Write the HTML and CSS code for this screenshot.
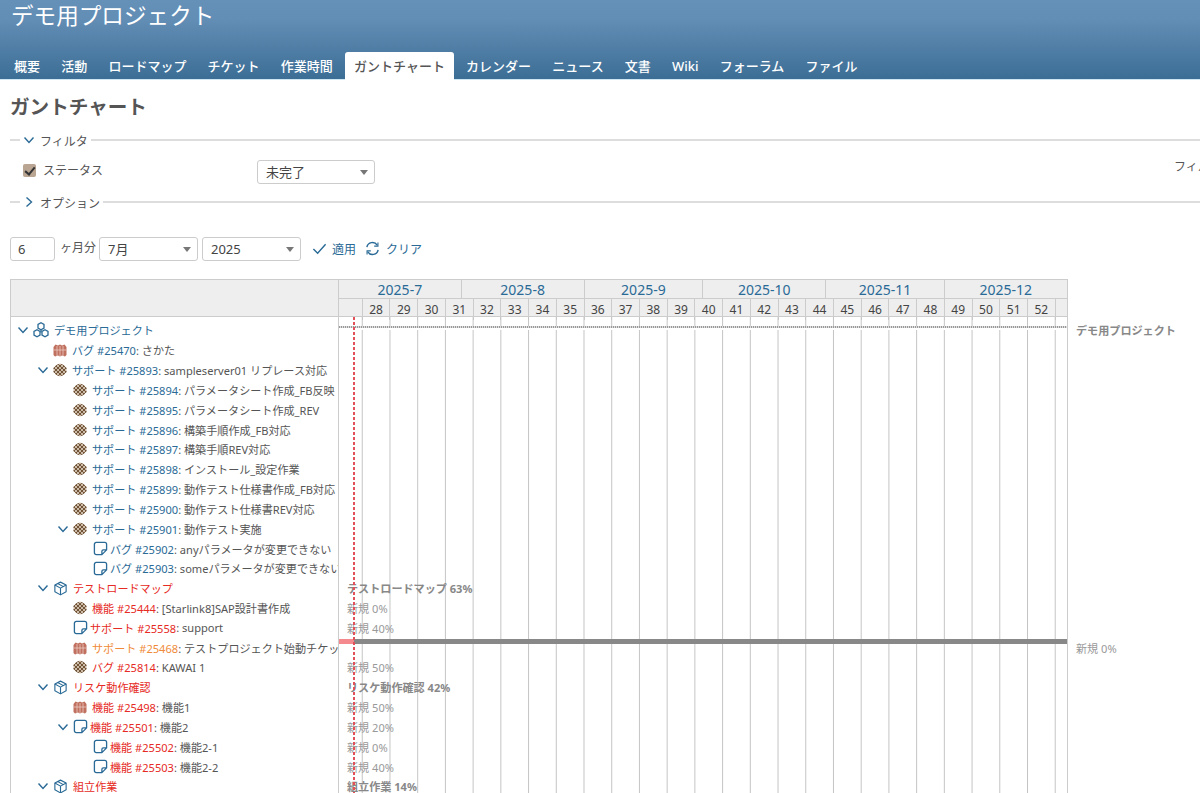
FILE: index.html
```html
<!DOCTYPE html>
<html lang="ja">
<head>
  <meta charset="UTF-8" />
  <title>ガントチャート - デモ用プロジェクト</title>
  <link rel="stylesheet" href="styles.css">
</head>
<body>
  <svg class="icon-defs" width="0" height="0">
    <defs>
      <clipPath id="knot-clip"><path d="M7 .5 10.500 2 13.500 5V9L10.500 12 7 13.500 3.500 12 .5 9V5L3.500 2Z"/></clipPath>
      <symbol id="i-down" viewBox="0 0 12 12"><path d="M1.5 3.5 6 8.5l4.500-5" fill="none" stroke="#2a6a96" stroke-width="1.400"/></symbol>
      <symbol id="i-right" viewBox="0 0 12 12"><path d="M3.500 1.500 8.500 6l-5 4.500" fill="none" stroke="#2a6a96" stroke-width="1.400"/></symbol>
      <symbol id="i-project" viewBox="0 0 16 16"><g fill="none" stroke="#2a6a96" stroke-width="1.300"><path d="M8 .8 11 2.500V6L8 7.700 5 6V2.500Z"/><path d="M4 7.800 7 9.500V13L4 14.700 1 13V9.500Z"/><path d="M12 7.800 15 9.500V13L12 14.700 9 13V9.500Z"/><path d="M8 7.700V10.500"/></g></symbol>
      <symbol id="i-version" viewBox="0 0 16 16"><g fill="none" stroke="#2a6a96" stroke-width="1.200" stroke-linejoin="round"><path d="M8 1.200 14 4.200V11.400L8 14.800 2 11.400V4.200Z"/><path d="M2 4.200 8 7.600 14 4.200M8 7.600V14.800M5 2.700 11 6"/></g></symbol>
      <symbol id="i-note" viewBox="0 0 16 16"><path d="M9.500 14.500H3.500A2 2 0 0 1 1.500 12.500V3.500A2 2 0 0 1 3.500 1.500H12.500A2 2 0 0 1 14.500 3.500V9.500ZM9.500 14.500V11A1.500 1.500 0 0 1 11 9.500H14.500" fill="none" stroke="#2a6a96" stroke-width="1.400" stroke-linejoin="round"/></symbol>
      <symbol id="i-knot" viewBox="0 0 14 14"><g clip-path="url(#knot-clip)"><rect width="14" height="14" fill="#cbbba7"/><path d="M-3 5 5-3M-3 9 9-3M-1 11 11-1M1 13 13 1M3 15 15 3M5 17 17 5M-3 9 5 17M-3 5 9 17M-1 3 11 15M1 1 13 13M3-1 15 11M5-3 17 9" stroke="#6b4d32" stroke-width=".95"/></g></symbol>
      <symbol id="i-block" viewBox="0 0 14 14"><path d="M2.500 1.500 5 2.500 7 1.500 9 2.500 11.500 1.500 13.500 4V12L12 13.500 9 12.500 7 13.500 5 12.500 2 13.500 .5 12V4Z" fill="#c0705f"/><g stroke="#efd6cf" stroke-width=".7"><path d="M.5 7H13.500M4 3V13M7 3V13M10 3V13"/></g></symbol>
    </defs>
  </svg>

  <header class="top-header">
    <h1>デモ用プロジェクト</h1>
    <nav class="tabs">
      <a href="#">概要</a>
      <a href="#">活動</a>
      <a href="#">ロードマップ</a>
      <a href="#">チケット</a>
      <a href="#">作業時間</a>
      <a href="#" class="active">ガントチャート</a>
      <a href="#">カレンダー</a>
      <a href="#">ニュース</a>
      <a href="#">文書</a>
      <a href="#">Wiki</a>
      <a href="#">フォーラム</a>
      <a href="#">ファイル</a>
    </nav>
  </header>

  <main class="content">
    <h2>ガントチャート</h2>

    <fieldset class="collapsible filter-box">
      <legend><svg class="chevron"><use href="#i-down"/></svg><span class="legend-text">フィルタ</span></legend>
      <div class="filter-row">
        <label class="filter-name"><input type="checkbox" checked /> ステータス</label>
        <span class="select status-select"><select><option>未完了</option></select></span>
        <span class="add-filter">フィルタ追加</span>
      </div>
    </fieldset>

    <fieldset class="collapsible option-box">
      <legend><svg class="chevron"><use href="#i-right"/></svg><span class="legend-text">オプション</span></legend>
    </fieldset>

    <form class="range-form">
      <input class="months-input" type="text" value="6" />
      <span class="months-label">ヶ月分</span>
      <span class="select range-select"><select><option>7月</option></select></span>
      <span class="select range-select"><select><option>2025</option></select></span>
      <a href="#" class="action apply">
        <svg class="action-icon" viewBox="0 0 16 16"><path d="M1.500 8.500 6 13 14.500 3.500" fill="none" stroke="#2a6a96" stroke-width="1.500"/></svg>適用
      </a>
      <a href="#" class="action clear">
        <svg class="action-icon" viewBox="0 0 16 16"><path d="M2 6.500A6 6 0 0 1 13 4.500M14 9.500A6 6 0 0 1 3 11.500" fill="none" stroke="#2a6a96" stroke-width="1.500"/><path d="M13.800 1.500V5.500H9.800M2.200 14.500V10.500H6.200" fill="none" stroke="#2a6a96" stroke-width="1.200"/></svg>クリア
      </a>
    </form>

    <section class="gantt">
      <div class="subjects">
        <div class="subjects-head"></div>
        <ul class="subject-list">
          <li class="lv0"><svg class="tree-toggle"><use href="#i-down"/></svg><svg class="ic ic-project"><use href="#i-project"/></svg><a href="#" class="link">デモ用プロジェクト</a></li>
          <li class="lv1"><svg class="ic"><use href="#i-block"/></svg><a href="#" class="link">バグ #25470</a>: さかた</li>
          <li class="lv1"><svg class="tree-toggle"><use href="#i-down"/></svg><svg class="ic"><use href="#i-knot"/></svg><a href="#" class="link">サポート #25893</a>: sampleserver01 リプレース対応</li>
          <li class="lv2"><svg class="ic"><use href="#i-knot"/></svg><a href="#" class="link">サポート #25894</a>: パラメータシート作成_FB反映</li>
          <li class="lv2"><svg class="ic"><use href="#i-knot"/></svg><a href="#" class="link">サポート #25895</a>: パラメータシート作成_REV</li>
          <li class="lv2"><svg class="ic"><use href="#i-knot"/></svg><a href="#" class="link">サポート #25896</a>: 構築手順作成_FB対応</li>
          <li class="lv2"><svg class="ic"><use href="#i-knot"/></svg><a href="#" class="link">サポート #25897</a>: 構築手順REV対応</li>
          <li class="lv2"><svg class="ic"><use href="#i-knot"/></svg><a href="#" class="link">サポート #25898</a>: インストール_設定作業</li>
          <li class="lv2"><svg class="ic"><use href="#i-knot"/></svg><a href="#" class="link">サポート #25899</a>: 動作テスト仕様書作成_FB対応</li>
          <li class="lv2"><svg class="ic"><use href="#i-knot"/></svg><a href="#" class="link">サポート #25900</a>: 動作テスト仕様書REV対応</li>
          <li class="lv2"><svg class="tree-toggle"><use href="#i-down"/></svg><svg class="ic"><use href="#i-knot"/></svg><a href="#" class="link">サポート #25901</a>: 動作テスト実施</li>
          <li class="lv3"><svg class="ic ic-note"><use href="#i-note"/></svg><a href="#" class="link">バグ #25902</a>: anyパラメータが変更できない</li>
          <li class="lv3"><svg class="ic ic-note"><use href="#i-note"/></svg><a href="#" class="link">バグ #25903</a>: someパラメータが変更できない</li>
          <li class="lv1"><svg class="tree-toggle"><use href="#i-down"/></svg><svg class="ic ic-version"><use href="#i-version"/></svg><a href="#" class="late">テストロードマップ</a></li>
          <li class="lv2"><svg class="ic"><use href="#i-knot"/></svg><a href="#" class="late">機能 #25444</a>: [Starlink8]SAP設計書作成</li>
          <li class="lv2"><svg class="ic ic-note"><use href="#i-note"/></svg><a href="#" class="late">サポート #25558</a>: support</li>
          <li class="lv2"><svg class="ic"><use href="#i-block"/></svg><a href="#" class="warn">サポート #25468</a>: テストプロジェクト始動チケット</li>
          <li class="lv2"><svg class="ic"><use href="#i-knot"/></svg><a href="#" class="late">バグ #25814</a>: KAWAI 1</li>
          <li class="lv1"><svg class="tree-toggle"><use href="#i-down"/></svg><svg class="ic ic-version"><use href="#i-version"/></svg><a href="#" class="late">リスケ動作確認</a></li>
          <li class="lv2"><svg class="ic"><use href="#i-block"/></svg><a href="#" class="late">機能 #25498</a>: 機能1</li>
          <li class="lv2"><svg class="tree-toggle"><use href="#i-down"/></svg><svg class="ic ic-note"><use href="#i-note"/></svg><a href="#" class="late">機能 #25501</a>: 機能2</li>
          <li class="lv3"><svg class="ic ic-note"><use href="#i-note"/></svg><a href="#" class="late">機能 #25502</a>: 機能2-1</li>
          <li class="lv3"><svg class="ic ic-note"><use href="#i-note"/></svg><a href="#" class="late">機能 #25503</a>: 機能2-2</li>
          <li class="lv1"><svg class="tree-toggle"><use href="#i-down"/></svg><svg class="ic ic-version"><use href="#i-version"/></svg><a href="#" class="late">組立作業</a></li>
        </ul>
      </div>

      <div class="chart">
        <div class="months">
          <div class="m-first">2025-7</div>
          <div class="m31">2025-8</div>
          <div class="m30">2025-9</div>
          <div class="m31">2025-10</div>
          <div class="m30">2025-11</div>
          <div class="m31">2025-12</div>
        </div>
        <div class="weeks">
          <div></div><div>28</div><div>29</div><div>30</div><div>31</div><div>32</div><div>33</div><div>34</div><div>35</div><div>36</div><div>37</div><div>38</div><div>39</div><div>40</div><div>41</div><div>42</div><div>43</div><div>44</div><div>45</div><div>46</div><div>47</div><div>48</div><div>49</div><div>50</div><div>51</div><div>52</div><div></div>
        </div>
        <div class="chart-body">
          <div class="today"></div>
          <div class="chart-row"><span class="project-bar"></span><span class="outer-label strong">デモ用プロジェクト</span></div>
          <div class="chart-row"></div>
          <div class="chart-row"></div>
          <div class="chart-row"></div>
          <div class="chart-row"></div>
          <div class="chart-row"></div>
          <div class="chart-row"></div>
          <div class="chart-row"></div>
          <div class="chart-row"></div>
          <div class="chart-row"></div>
          <div class="chart-row"></div>
          <div class="chart-row"></div>
          <div class="chart-row"></div>
          <div class="chart-row"><span class="bar-label strong">テストロードマップ 63%</span></div>
          <div class="chart-row"><span class="bar-label">新規 0%</span></div>
          <div class="chart-row"><span class="bar-label">新規 40%</span></div>
          <div class="chart-row"><span class="task-bar"><span class="task-late"></span></span><span class="outer-label">新規 0%</span></div>
          <div class="chart-row"><span class="bar-label">新規 50%</span></div>
          <div class="chart-row"><span class="bar-label strong">リスケ動作確認 42%</span></div>
          <div class="chart-row"><span class="bar-label">新規 50%</span></div>
          <div class="chart-row"><span class="bar-label">新規 20%</span></div>
          <div class="chart-row"><span class="bar-label">新規 0%</span></div>
          <div class="chart-row"><span class="bar-label">新規 40%</span></div>
          <div class="chart-row"><span class="bar-label strong">組立作業 14%</span></div>
        </div>
      </div>
    </section>
  </main>
</body>
</html>
```

FILE: styles.css
```css
html, body {
  height: 793px;
  overflow: hidden;
}

body {
  margin: 0;
  font-family: "Noto Sans", "Noto Sans CJK JP", sans-serif;
  font-size: 12px;
  color: #555;
  background: #fff;
}

a {
  text-decoration: none;
}

.icon-defs {
  position: absolute;
}

/* header */
.top-header {
  height: 79px;
  padding-left: 5px;
  background: linear-gradient(#6590b8, #628db5 25%, #3c6e95);
  border-bottom: 1px solid #cfe6f3;
  display: flex;
  flex-direction: column;
  justify-content: space-between;
}

.top-header h1 {
  margin: 0 0 0 6px;
  color: #fff;
  font-size: 22.6px;
  font-weight: 400;
  line-height: 31px;
}

.tabs {
  display: flex;
  height: 27px;
  gap: 3.2px;
}

.tabs a {
  padding: 0 9px;
  line-height: 28px;
  font-size: 13px;
  font-weight: 500;
  color: #fff;
  border-radius: 3px 3px 0 0;
}

.tabs a.active {
  background: #fff;
  color: #555;
  margin-bottom: -1px;
}

/* page */
.content {
  padding: 0 0 0 10px;
}

.content h2 {
  margin: 13px 0 0;
  font-size: 19.6px;
  line-height: 28px;
  color: #555;
}

.collapsible {
  margin: 0;
  padding: 0;
  border: 0;
  border-top: 2px solid #ddd;
}

.collapsible legend {
  margin-left: 10px;
  padding: 0 3px;
  display: flex;
  align-items: center;
  gap: 5px;
  line-height: 16px;
  color: #555;
}

.legend-text {
  transform: translateY(1.5px);
}

.chevron {
  width: 12px;
  height: 12px;
}

.filter-box {
  margin-top: 11px;
  width: 1300px;
}

.filter-row {
  height: 47px;
  display: flex;
  align-items: center;
  padding-left: 13px;
  box-sizing: border-box;
}

.filter-name {
  width: 234px;
  display: flex;
  align-items: center;
  gap: 7px;
  margin-top: -3px;
}

.filter-name input {
  appearance: none;
  margin: 0;
  width: 13px;
  height: 13px;
  background: #b9a592;
  border-radius: 2px;
  position: relative;
}

.filter-name input::after {
  content: "";
  position: absolute;
  left: 4px;
  top: 1px;
  width: 4px;
  height: 8px;
  border: solid #333;
  border-width: 0 2px 2px 0;
  transform: rotate(40deg);
}

.add-filter {
  margin-left: 799px;
  margin-top: -11px;
  white-space: nowrap;
}

.option-box {
  margin-top: -1.5px;
  width: 1300px;
}

.select {
  display: inline-block;
  position: relative;
}

.select select {
  appearance: none;
  box-sizing: border-box;
  width: 100%;
  height: 24px;
  padding: 0 8px;
  font: inherit;
  font-size: 13px;
  color: #444;
  background: #fff;
  border: 1px solid #ccc;
  border-radius: 3px;
}

.select::after {
  content: "";
  position: absolute;
  right: 7px;
  top: 10px;
  border: 4px solid transparent;
  border-top: 5px solid #777;
  border-bottom: 0;
}

.status-select {
  width: 118px;
}

.range-form {
  margin-top: 27px;
  height: 24px;
  display: flex;
  align-items: center;
}

.months-input {
  box-sizing: border-box;
  width: 45px;
  height: 24px;
  padding: 0 7px;
  font: inherit;
  font-size: 13px;
  color: #444;
  border: 1px solid #ccc;
  border-radius: 3px;
}

.months-label {
  margin: -3px 3px 0 5px;
  width: 36px;
}

.range-select {
  width: 99px;
  margin-right: 4px;
}

.action {
  display: flex;
  align-items: center;
  color: #2a6a96;
}

.action-icon {
  width: 15px;
  height: 15px;
}

.apply {
  margin-left: 7px;
  gap: 5px;
}

.clear {
  margin-left: 9px;
  gap: 6px;
}

/* gantt */
.gantt {
  margin-top: 18px;
  display: flex;
  width: 1058px;
  border: 1px solid #ccc;
  border-width: 1px 1px 0;
  box-sizing: border-box;
  font-size: 11.1px;
}

.subjects {
  width: 327px;
  flex: none;
  border-right: 1px solid #ccc;
}

.subjects-head {
  height: 36px;
  background: #eee;
  border-bottom: 1px solid #ccc;
}

.subject-list {
  list-style: none;
  margin: 0;
  padding: 4px 0 0;
  height: 480px;
}

.subject-list li {
  display: flex;
  align-items: center;
  height: 19.83px;
  white-space: nowrap;
  overflow: hidden;
}

.lv0 { padding-left: 22px; }
.lv1 { padding-left: 42px; }
.lv2 { padding-left: 62px; }
.lv3 { padding-left: 82px; }

.ic {
  flex: none;
  width: 14px;
  height: 14px;
  margin-right: 5px;
}

.ic-project {
  width: 16px;
  height: 16px;
}

.ic-version {
  width: 15px;
  height: 15px;
}

.ic-note {
  width: 15px;
  height: 15px;
  margin-right: 2px;
}

.tree-toggle {
  flex: none;
  width: 12px;
  height: 12px;
  margin-left: -16px;
  margin-right: 4px;
}

.link { color: #2a6a96; }
.late { color: #e62a24; }
.warn { color: #ef8b3a; }

.chart {
  width: 728px;
  flex: none;
}

.months {
  display: flex;
  height: 18px;
  background: #eee;
  border-bottom: 1px solid #ccc;
}

.months div {
  box-sizing: border-box;
  text-align: center;
  font-size: 14px;
  line-height: 20px;
  color: #2a6a96;
  border-left: 1px solid #ccc;
}

.months div:first-child {
  border-left: 0;
}

.m-first { width: 121.76px; }
.m31 { width: 122.76px; }
.m30 { width: 118.8px; }

.weeks {
  display: grid;
  grid-template-columns: 22.76px repeat(25, 27.72px) 1fr;
  height: 17px;
  background: #eee;
  border-bottom: 1px solid #ccc;
  font-size: 12px;
}

.weeks div {
  text-align: center;
  line-height: 21px;
  border-left: 1px solid #ccc;
  color: #444;
}

.weeks div:first-child {
  border-left: 0;
}

.chart-body {
  position: relative;
  padding-top: 4px;
  height: 480px;
  background: linear-gradient(to right, #c4c4c4 1px, transparent 1px) 22.76px 0 / 27.72px 100% repeat-x;
}

.today {
  position: absolute;
  left: 14px;
  top: 0;
  bottom: 0;
  width: 2px;
  background: repeating-linear-gradient(#e2505a 0 3px, transparent 3px 5px);
}

.chart-row {
  display: flex;
  align-items: center;
  height: 19.83px;
  white-space: nowrap;
  color: #999;
}

.bar-label {
  margin-left: 8px;
}

.strong {
  font-weight: 700;
  color: #888;
}

.outer-label {
  margin-left: 9px;
}

.project-bar {
  width: 728px;
  flex: none;
  height: 2px;
  margin-bottom: 5px;
  border-bottom: 2px solid #fff;
  background: repeating-linear-gradient(to right, #999 0 1px, #ddd 1px 2px);
}

.task-bar {
  width: 728px;
  flex: none;
  height: 5px;
  margin-bottom: 12px;
  background: #888;
}

.task-late {
  display: block;
  width: 15px;
  height: 5px;
  background: #f58a8e;
}
```
